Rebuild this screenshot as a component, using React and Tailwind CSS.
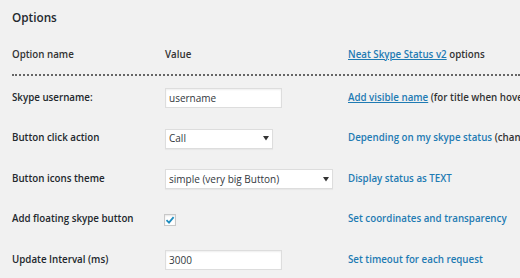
import React from 'react';

const rows = [
    {
        label: 'Skype username:',
        control: { type: 'input', value: 'username' },
        note: [{ text: 'Add visible name', link: true, underline: true }, { text: ' (for title when hovering the button)' }],
    },
    {
        label: 'Button click action',
        control: { type: 'select', value: 'Call', width: 'w-[108px]' },
        note: [{ text: 'Depending on my skype status', link: true }, { text: ' (change the image)' }],
    },
    {
        label: 'Button icons theme',
        control: { type: 'select', value: 'simple (very big Button)', width: 'w-[168px]' },
        note: [{ text: 'Display status as TEXT', link: true }],
    },
    {
        label: 'Add floating skype button',
        control: { type: 'checkbox' },
        note: [{ text: 'Set coordinates and transparency', link: true }],
    },
    {
        label: 'Update Interval (ms)',
        control: { type: 'input', value: '3000' },
        note: [{ text: 'Set timeout for each request', link: true }],
    },
];

const Control = ({ control }) => {
    if (control.type === 'checkbox') {
        return (
            <div className="w-3 h-3 -ml-px bg-white border border-[#c8c8c8] shadow-[inset_0_1px_2px_rgba(0,0,0,0.1)] flex items-center justify-center">
                <svg width="10" height="10" viewBox="0 0 10 10">
                    <path d="M1.5 5.2 L4 7.6 L8.6 2.2" fill="none" stroke="#1e8cbe" strokeWidth="1.8" />
                </svg>
            </div>
        );
    }
    if (control.type === 'select') {
        return (
            <div className={`${control.width} h-5 bg-white border border-[#ddd] shadow-[0_1px_1px_rgba(0,0,0,0.04)] flex items-center justify-between pl-[3px] pr-[3px] text-[10px] text-[#32373c] font-normal`}>
                <span>{control.value}</span>
                <svg width="6" height="5" viewBox="0 0 6 5">
                    <path d="M0 0 H6 L3 4.5 Z" fill="#333" />
                </svg>
            </div>
        );
    }
    return (
        <div className="w-[117px] h-5 bg-white border border-[#ddd] shadow-[inset_0_1px_2px_rgba(0,0,0,0.07)] flex items-center pl-[3px] text-[10px] text-[#32373c] font-normal">
            {control.value}
        </div>
    );
};

const App = () => {
    return (
        <div
            className="w-[520px] h-[278px] overflow-hidden bg-[#f1f1f1] text-[#333] whitespace-nowrap"
            style={{ fontFamily: '"Open Sans", "Liberation Sans", sans-serif' }}
        >
            <h2 className="pl-3 pt-[9px] h-[44px] text-[11.75px] font-semibold text-[#23282d]">Options</h2>

            <div className="flex items-center h-[22px] text-[9.75px] font-semibold text-[#333]">
                <div className="w-[165px] shrink-0 pl-3">Option name</div>
                <div className="w-[183px] shrink-0">Value</div>
                <div className="shrink-0">
                    <span className="text-[#1f7bb3] underline">Neat Skype Status v2</span> options
                </div>
            </div>

            <div className="ml-3 mt-[8px] border-t-2 border-dotted border-[#666]" />

            <div className="flex flex-col pt-[2px]">
                {rows.map((row, i) => (
                    <div key={i} className="flex items-center h-[40.5px] text-[9.75px] font-semibold">
                        <div className="w-[165px] shrink-0 pl-3 text-[#23282d]">{row.label}</div>
                        <div className="w-[183px] shrink-0">
                            <Control control={row.control} />
                        </div>
                        <div className="shrink-0">
                            {row.note.map((n, j) => (
                                <span
                                    key={j}
                                    className={n.link ? `text-[#1f7bb3] ${n.underline ? 'underline' : ''}` : 'text-[#333]'}
                                >
                                    {n.text}
                                </span>
                            ))}
                        </div>
                    </div>
                ))}
            </div>
        </div>
    );
};

export default App;
